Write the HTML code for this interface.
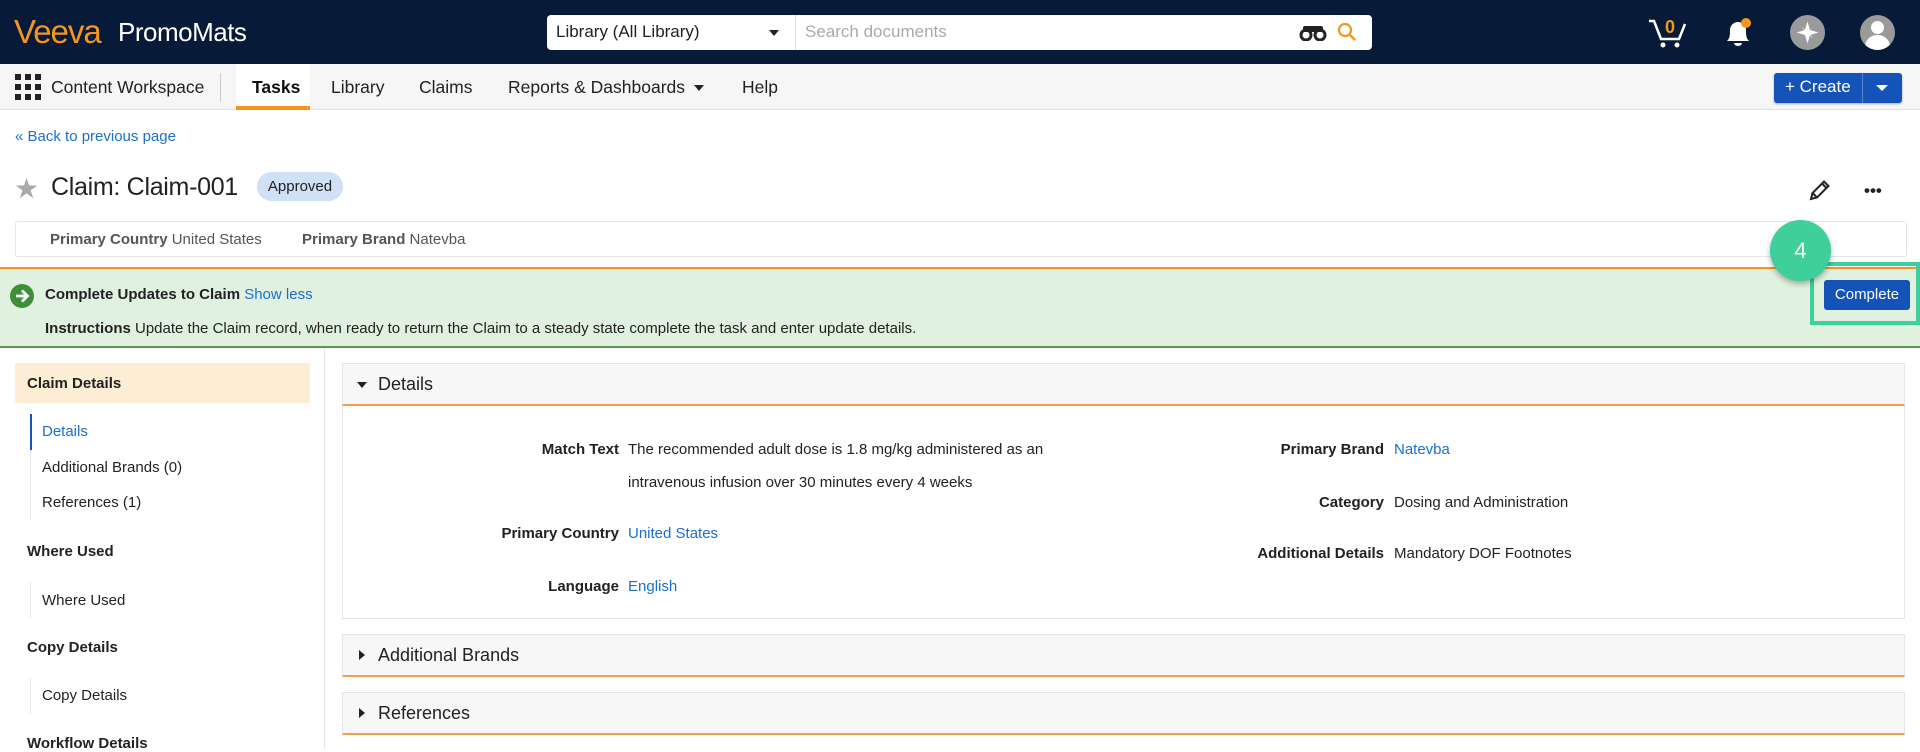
<!DOCTYPE html>
<html><head><meta charset="utf-8"><style>
*{box-sizing:border-box;margin:0;padding:0}
body{width:1920px;height:748px;overflow:hidden;font-family:"Liberation Sans",Arial,sans-serif;color:#222;background:#fff;position:relative;font-size:15px}
.a{position:absolute;white-space:nowrap}
.hdr{position:absolute;left:0;top:0;width:1920px;height:64px;background:#071a38}
.nav{position:absolute;left:0;top:64px;width:1920px;height:46px;background:#f6f6f6;border-bottom:1px solid #e2e2e2}
.nav .a{font-size:17.5px;color:#222;top:13px}
.blue{color:#1a6fd1}
.lbl{font-weight:bold;text-align:right;width:300px}
.sec{position:absolute;left:342px;width:1563px;background:#f7f7f7;border:1px solid #e6e6e6;border-bottom:2px solid #f0a050}
.sec span{position:absolute;left:35px;font-size:18px;color:#222}
</style></head><body>
<div class="hdr"></div>
<div class="a" style="left:14px;top:13px;font-size:33px;color:#f5951e;letter-spacing:-1px">Veeva</div>
<div class="a" style="left:118px;top:17px;font-size:26px;color:#fff;letter-spacing:-0.5px">PromoMats</div>
<div class="a" style="left:547px;top:15px;width:825px;height:35px;background:#fff;border-radius:4px"></div>
<div class="a" style="left:795px;top:15px;width:1px;height:35px;background:#ddd"></div>
<div class="a" style="left:556px;top:22px;font-size:17px;color:#222">Library (All Library)</div>
<div class="a" style="left:769px;top:30px;border-left:5px solid transparent;border-right:5px solid transparent;border-top:6px solid #222"></div>
<div class="a" style="left:805px;top:22px;font-size:17px;color:#aaa">Search documents</div>
<svg class="a" style="left:1299px;top:25px" width="28" height="16" viewBox="0 0 28 16"><circle cx="7" cy="10" r="5" fill="none" stroke="#222" stroke-width="3"/><circle cx="21" cy="10" r="5" fill="none" stroke="#222" stroke-width="3"/><rect x="4" y="1" width="20" height="6" rx="2" fill="#222"/></svg>
<svg class="a" style="left:1337px;top:22px" width="20" height="20" viewBox="0 0 20 20"><circle cx="8" cy="8" r="6" fill="none" stroke="#f5951e" stroke-width="2.2"/><line x1="12.5" y1="12.5" x2="18" y2="18" stroke="#f5951e" stroke-width="2.4"/></svg>
<svg class="a" style="left:1648px;top:18px" width="40" height="32" viewBox="0 0 40 32"><path d="M1 3h5l7 18h18l6-15" fill="none" stroke="#fff" stroke-width="2.5"/><circle cx="15" cy="27" r="2.5" fill="#fff"/><circle cx="29" cy="27" r="2.5" fill="#fff"/></svg>
<div class="a" style="left:1665px;top:17px;font-size:18px;color:#f5951e;font-weight:bold">0</div>
<svg class="a" style="left:1724px;top:18px" width="28" height="30" viewBox="0 0 28 30"><path d="M3 23c3-3 3-6 3-11a8 8 0 0 1 16 0c0 5 0 8 3 11z" fill="#fff"/><path d="M10 25a4 3 0 0 0 8 0z" fill="#fff"/><circle cx="22" cy="5" r="5" fill="#f5951e"/></svg>
<div class="a" style="left:1790px;top:15px;width:35px;height:35px;border-radius:50%;background:#9a9a9a"></div>
<svg class="a" style="left:1794px;top:19px" width="27" height="27" viewBox="-13.5 -13.5 27 27"><path d="M0-11L2.5-2.5 11 0 2.5 2.5 0 11-2.5 2.5-11 0-2.5-2.5z M-6-6L1 0 6 6 0 1z M6-6L0 1-6 6 1 0z" fill="#fff"/></svg>
<div class="a" style="left:1860px;top:15px;width:35px;height:35px;border-radius:50%;background:#9a9a9a;overflow:hidden"><div class="a" style="left:11px;top:6px;width:13px;height:13px;border-radius:50%;background:#fff"></div><div class="a" style="left:5px;top:20px;width:25px;height:18px;border-radius:12px 12px 0 0;background:#fff"></div></div>

<div class="nav"></div>
<svg class="a" style="left:15px;top:74px" width="26" height="26" viewBox="0 0 26 26" fill="#222"><rect x="0" y="0" width="6" height="6"/><rect x="10" y="0" width="6" height="6"/><rect x="20" y="0" width="6" height="6"/><rect x="0" y="10" width="6" height="6"/><rect x="10" y="10" width="6" height="6"/><rect x="20" y="10" width="6" height="6"/><rect x="0" y="20" width="6" height="6"/><rect x="10" y="20" width="6" height="6"/><rect x="20" y="20" width="6" height="6"/></svg>
<div class="nav" style="background:none;border:none">
<div class="a" style="left:51px">Content Workspace</div>
<div class="a" style="left:220px;top:9px;width:1px;height:29px;background:#ccc"></div>
<div class="a" style="left:236px;top:0;width:74px;height:46px;background:#fff;border-bottom:4px solid #f5951e"></div>
<div class="a" style="left:252px;font-weight:bold;color:#111">Tasks</div>
<div class="a" style="left:331px">Library</div>
<div class="a" style="left:419px">Claims</div>
<div class="a" style="left:508px">Reports &amp; Dashboards</div>
<div class="a" style="left:694px;top:21px;border-left:5px solid transparent;border-right:5px solid transparent;border-top:6px solid #222"></div>
<div class="a" style="left:742px">Help</div>
</div>
<div class="a" style="left:1774px;top:73px;width:128px;height:30px;background:#1453b8;border-radius:3px;box-shadow:0 1px 2px rgba(0,0,0,.3)"></div>
<div class="a" style="left:1785px;top:77px;font-size:17px;color:#fff">+ Create</div>
<div class="a" style="left:1862px;top:73px;width:1px;height:30px;background:#5a85cc"></div>
<div class="a" style="left:1876px;top:85px;border-left:6px solid transparent;border-right:6px solid transparent;border-top:6px solid #fff"></div>

<div class="a blue" style="left:15px;top:128px;font-size:15px">« Back to previous page</div>
<div class="a" style="left:14px;top:172px;font-size:28px;color:#aaa">★</div>
<div class="a" style="left:51px;top:173px;font-size:25px;color:#222;letter-spacing:-0.3px">Claim: Claim-001</div>
<div class="a" style="left:257px;top:172px;width:86px;height:29px;background:#cfe0f7;border-radius:15px;font-size:15px;text-align:center;line-height:29px">Approved</div>
<svg class="a" style="left:1808px;top:178px" width="24" height="24" viewBox="0 0 24 24"><path d="M3 21l1.5-6L16 3.5l4.5 4.5L9 19.5z M14 5.5l4.5 4.5 M4.5 15l4.5 4.5" fill="none" stroke="#222" stroke-width="2"/></svg>
<div class="a" style="left:1864px;top:181px;font-size:17px;font-weight:bold;letter-spacing:0px">•••</div>

<div class="a" style="left:15px;top:221px;width:1892px;height:36px;border:1px solid #e5e5e5;border-radius:3px"></div>
<div class="a" style="left:50px;top:231px;color:#555"><b>Primary Country</b> United States</div>
<div class="a" style="left:302px;top:231px;color:#555"><b>Primary Brand</b> Natevba</div>

<div class="a" style="left:0;top:267px;width:1920px;height:81px;background:#e0f1df;border-top:2px solid #f5951e;border-bottom:2px solid #5a9a4a"></div>
<div class="a" style="left:10px;top:284px;width:24px;height:24px;border-radius:50%;background:#3f8f3a"></div>
<svg class="a" style="left:10px;top:284px" width="24" height="24" viewBox="0 0 24 24"><path d="M6 12h11M12 6.5l5.5 5.5-5.5 5.5" fill="none" stroke="#fff" stroke-width="2.8"/></svg>
<div class="a" style="left:45px;top:286px;font-size:15px"><b>Complete Updates to Claim</b> <span class="blue">Show less</span></div>
<div class="a" style="left:45px;top:320px;font-size:15px"><b>Instructions</b> Update the Claim record, when ready to return the Claim to a steady state complete the task and enter update details.</div>
<div class="a" style="left:1810px;top:262px;width:110px;height:63px;border:4px solid #3ecf9a"></div>
<div class="a" style="left:1859px;top:280px;width:51px;height:30px;background:#1453b8;border-radius:3px;left:1824px;width:86px;color:#fff;text-align:center;line-height:30px;font-size:15px">Complete</div>
<div class="a" style="left:1770px;top:220px;width:61px;height:61px;border-radius:50%;background:#3ecf9a;box-shadow:0 3px 6px rgba(0,0,0,.3);color:#fff;font-size:22px;text-align:center;line-height:61px">4</div>

<div class="a" style="left:324px;top:349px;width:1px;height:400px;background:#e5e5e5"></div>
<div class="a" style="left:15px;top:363px;width:295px;height:40px;background:#feedd5;border-radius:2px"></div>
<div class="a" style="left:27px;top:375px;font-weight:bold">Claim Details</div>
<div class="a" style="left:30px;top:414px;width:2px;height:36px;background:#1453b8"></div>
<div class="a" style="left:30px;top:450px;width:1px;height:70px;background:#e5e5e5"></div>
<div class="a blue" style="left:42px;top:423px">Details</div>
<div class="a" style="left:42px;top:459px">Additional Brands (0)</div>
<div class="a" style="left:42px;top:494px">References (1)</div>
<div class="a" style="left:27px;top:543px;font-weight:bold">Where Used</div>
<div class="a" style="left:30px;top:582px;width:1px;height:36px;background:#e5e5e5"></div>
<div class="a" style="left:42px;top:592px">Where Used</div>
<div class="a" style="left:27px;top:639px;font-weight:bold">Copy Details</div>
<div class="a" style="left:30px;top:678px;width:1px;height:36px;background:#e5e5e5"></div>
<div class="a" style="left:42px;top:687px">Copy Details</div>
<div class="a" style="left:27px;top:735px;font-weight:bold">Workflow Details</div>

<div class="a" style="left:342px;top:363px;width:1563px;height:256px;border:1px solid #e6e6e6"></div>
<div class="sec" style="top:363px;height:43px"><span style="top:10px">Details</span><div class="a" style="left:14px;top:18px;border-left:5px solid transparent;border-right:5px solid transparent;border-top:6px solid #222"></div></div>
<div class="a lbl" style="left:319px;top:441px">Match Text</div>
<div class="a" style="left:628px;top:441px">The recommended adult dose is 1.8 mg/kg administered as an</div>
<div class="a" style="left:628px;top:474px">intravenous infusion over 30 minutes every 4 weeks</div>
<div class="a lbl" style="left:319px;top:525px">Primary Country</div>
<div class="a blue" style="left:628px;top:525px">United States</div>
<div class="a lbl" style="left:319px;top:578px">Language</div>
<div class="a blue" style="left:628px;top:578px">English</div>
<div class="a lbl" style="left:1084px;top:441px">Primary Brand</div>
<div class="a blue" style="left:1394px;top:441px">Natevba</div>
<div class="a lbl" style="left:1084px;top:494px">Category</div>
<div class="a" style="left:1394px;top:494px">Dosing and Administration</div>
<div class="a lbl" style="left:1084px;top:545px">Additional Details</div>
<div class="a" style="left:1394px;top:545px">Mandatory DOF Footnotes</div>

<div class="sec" style="top:634px;height:43px"><span style="top:10px">Additional Brands</span><div class="a" style="left:16px;top:15px;border-top:5px solid transparent;border-bottom:5px solid transparent;border-left:6px solid #222"></div></div>
<div class="sec" style="top:692px;height:43px"><span style="top:10px">References</span><div class="a" style="left:16px;top:15px;border-top:5px solid transparent;border-bottom:5px solid transparent;border-left:6px solid #222"></div></div>
</body></html>
